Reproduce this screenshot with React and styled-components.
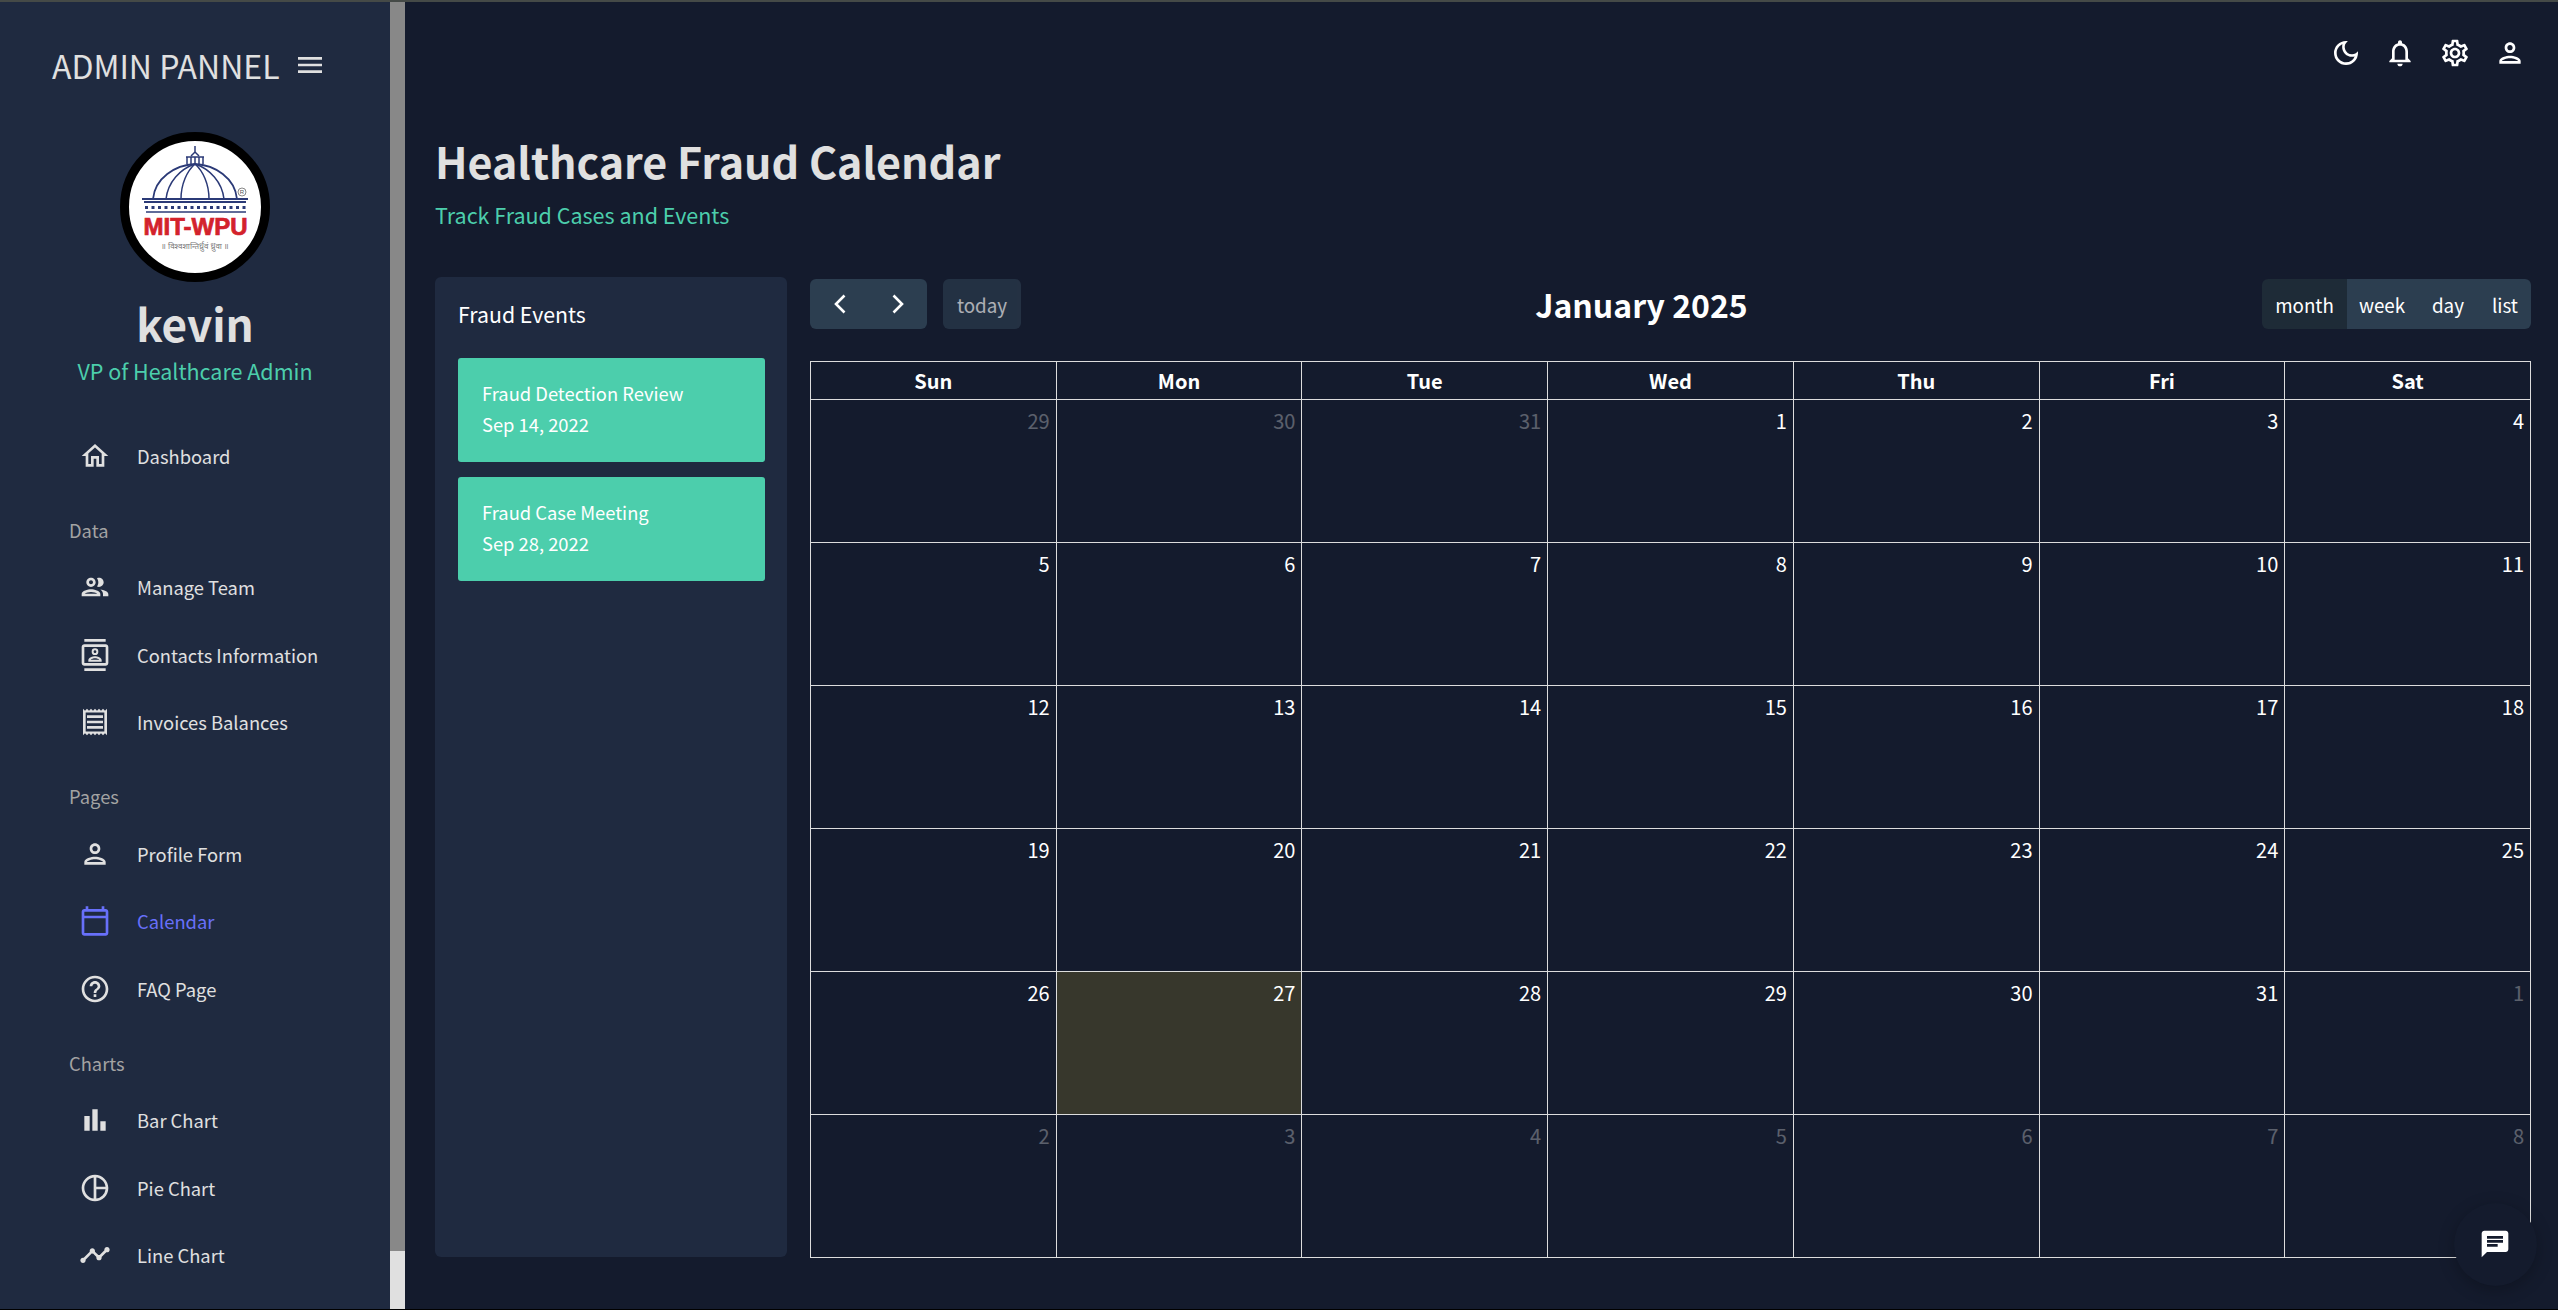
import React from 'react';
import styled, { createGlobalStyle } from 'styled-components';
import {
  MdOutlineHome, MdOutlinePeople, MdOutlineContacts, MdOutlineReceipt, MdOutlinePerson,
  MdOutlineCalendarToday, MdOutlineHelpOutline, MdOutlineBarChart, MdOutlinePieChart,
  MdOutlineTimeline, MdOutlineDarkMode, MdOutlineNotifications, MdOutlineSettings,
  MdOutlineMenu, MdChat,
} from 'react-icons/md';

const GlobalStyle = createGlobalStyle`
  html, body { margin: 0; padding: 0; height: 100%; background: #141b2d; overflow: hidden; }
  body { font-family: "Noto Sans CJK SC", "Noto Sans", sans-serif; }
  * { box-sizing: border-box; }
`;

const Page = styled.div`
  height: 1310px;
  display: flex;
  flex-direction: column;
  background: #141b2d;
  position: relative;
`;
const TopLine = styled.div`
  height: 2px;
  flex: none;
  background: #454a47;
`;
const BottomLine = styled.div`
  height: 1px;
  flex: none;
  background: #000;
`;
const Body = styled.div`
  flex: 1;
  display: flex;
  min-height: 0;
`;

/* sidebar */
const Sidebar = styled.aside`
  width: 390px;
  flex: none;
  background: #1f2a40;
  padding-top: 37px;
  display: flex;
  flex-direction: column;
`;
const Scrollbar = styled.div`
  width: 15px;
  flex: none;
  display: flex;
  flex-direction: column;
  background: #e0e0e0;
`;
const Thumb = styled.div`
  height: 1249px;
  background: #888;
`;
const Brand = styled.div`
  display: flex;
  align-items: center;
  padding-left: 52px;
  height: 52px;
  color: #e0e0e0;
  font-size: 32px;
  line-height: 52px;
  svg { margin-left: 14px; }
`;
const Avatar = styled.div`
  width: 150px;
  height: 150px;
  margin: 41px auto 0;
  border-radius: 50%;
  border: 9px solid #000;
  background: #fff;
  overflow: hidden;
  svg { display: block; margin: -9px; }
`;
const UserName = styled.div`
  margin-top: 10px;
  text-align: center;
  color: #e0e0e0;
  font-size: 44px;
  font-weight: 700;
  line-height: 62px;
`;
const UserRole = styled.div`
  margin-top: -1px;
  text-align: center;
  color: #4cceac;
  font-size: 21.5px;
  line-height: 36px;
`;
const Menu = styled.nav`
  margin-top: 33px;
  display: flex;
  flex-direction: column;
`;
const MenuItem = styled.div`
  height: 67.5px;
  display: flex;
  align-items: center;
  padding-left: 79px;
  font-size: 18.35px;
  color: ${props => (props.$active ? '#6870fa' : '#e0e0e0')};
  svg { flex: none; }
`;
const MenuText = styled.span`
  margin-left: 26px;
`;
const SectionLabel = styled.div`
  height: 64px;
  padding: 26px 0 0 69px;
  font-size: 18.35px;
  line-height: 28px;
  color: #a3a3a3;
`;

/* main */
const Main = styled.main`
  flex: 1;
  min-width: 0;
  display: flex;
  flex-direction: column;
`;
const TopBar = styled.div`
  display: flex;
  justify-content: flex-end;
  padding: 24px 21px 0 0;
  color: #fff;
`;
const TopIcon = styled.div`
  width: 54.7px;
  height: 54px;
  display: flex;
  align-items: center;
  justify-content: center;
`;
const Content = styled.div`
  padding: 47px 27px 0 30px;
`;
const Title = styled.h1`
  margin: 0;
  color: #e0e0e0;
  font-size: 43px;
  font-weight: 700;
  line-height: 66px;
`;
const Subtitle = styled.div`
  margin-top: 4px;
  color: #4cceac;
  font-size: 21.5px;
  line-height: 36px;
`;
const Columns = styled.div`
  margin-top: 44px;
  display: flex;
  gap: 23px;
`;
const EventPanel = styled.section`
  width: 352px;
  height: 980px;
  flex: none;
  padding: 19px 22px 0 23px;
  background: #1f2a40;
  border-radius: 6px;
`;
const PanelTitle = styled.div`
  color: #fff;
  font-size: 21.3px;
  line-height: 36px;
`;
const EventCard = styled.div`
  height: 104px;
  margin-top: ${props => props.$first ? '26px' : '15px'};
  padding: 20px 24px;
  background: #4cceac;
  border-radius: 3px;
  color: #fff;
  font-size: 18.35px;
  line-height: 31px;
`;
const Calendar = styled.section`
  flex: 1;
  min-width: 0;
`;
const CalToolbar = styled.div`
  height: 50px;
  margin-top: 2px;
  display: flex;
  justify-content: space-between;
  align-items: center;
`;
const ToolGroup = styled.div`
  display: flex;
  gap: ${props => props.$gap || 0}px;
`;
const ButtonGroup = styled.div`
  display: flex;
  height: 50px;
  border-radius: 6px;
  overflow: hidden;
`;
const ToolButton = styled.button`
  width: ${props => props.$w}px;
  height: 50px;
  padding: 0;
  border: 0;
  display: flex;
  align-items: center;
  justify-content: center;
  font-family: inherit;
  font-size: 18.8px;
  color: #fff;
  background: ${props => props.$active ? '#1e2b37' : '#2c3e50'};
`;
const TodayButton = styled(ToolButton)`
  opacity: 0.65;
  border-radius: 6px;
`;
const CalTitle = styled.h2`
  margin: 0;
  color: #fff;
  font-size: 32px;
  font-weight: 700;
  line-height: 50px;
`;
const Grid = styled.div`
  margin-top: 32px;
  display: grid;
  grid-template-columns: repeat(7, 1fr);
  grid-template-rows: 38px repeat(6, 143px);
  border-top: 1px solid #ddd;
  border-left: 1px solid #ddd;
`;
const HeadCell = styled.div`
  border-right: 1px solid #ddd;
  border-bottom: 1px solid #ddd;
  display: flex;
  align-items: center;
  justify-content: center;
  color: #fff;
  font-size: 20px;
  font-weight: 700;
`;
const DayCell = styled.div`
  border-right: 1px solid #ddd;
  border-bottom: 1px solid #ddd;
  padding: 6px 6px 0 0;
  text-align: right;
  font-size: 20px;
  line-height: 30px;
  background: ${props => props.$today ? 'rgba(255, 220, 40, 0.15)' : 'transparent'};
`;
const DayNumber = styled.span`
  color: #fff;
  opacity: ${props => props.$muted ? 0.3 : 1};
`;
const ChatButton = styled.div`
  position: absolute;
  left: 2453.5px;
  top: 1202.5px;
  width: 83px;
  height: 83px;
  border-radius: 50%;
  background: #141b2d;
  color: #fff;
  display: flex;
  align-items: center;
  justify-content: center;
  box-shadow: 0 4px 16px rgba(0, 0, 0, 0.25);
`;

const MitLogo = () => (
  <svg width="150" height="150" viewBox="0 0 150 150">
    <g fill="none" stroke="#2b3a77" strokeWidth="1.5">
      <path d="M33 67C35 46 55 33 75 32C95 33 115 46 117 67" strokeWidth="1.8" />
      <path d="M46 67C48 50 60 37 75 32C90 37 102 50 104 67" />
      <path d="M61 67C61 52 67 39 75 32C83 39 89 52 89 67" />
      <path d="M67 32V25H83V32M71 25V32M75 25V32M79 25V32M66 25H84" />
      <path d="M71 24L75 20L79 24M75 20V14" />
      <path d="M22 67H128M24 70H126" strokeWidth="2" />
      <path d="M26 80H126" strokeWidth="1.5" />
    </g>
    <g stroke="#2b3a77" strokeWidth="3" strokeDasharray="3 3.5">
      <path d="M25 75.5H126" />
    </g>
    <circle cx="122" cy="60" r="4" fill="none" stroke="#555" strokeWidth="0.7" />
    <text x="122" y="62" textAnchor="middle" fontSize="6" fill="#555" fontFamily="'Liberation Sans', sans-serif">R</text>
    <text x="75.5" y="103" textAnchor="middle" fontSize="23" fontWeight="700" fill="#d3222c" stroke="#d3222c" strokeWidth="0.7" textLength="104" lengthAdjust="spacingAndGlyphs" fontFamily="'Liberation Sans', sans-serif">MIT-WPU</text>
    <text x="75" y="117" textAnchor="middle" fontSize="8" fill="#777" fontFamily="'Noto Sans', 'Liberation Sans', sans-serif">॥ विश्वशान्तिर्ध्रुवं ध्रुवा ॥</text>
  </svg>
);

const ChevronLeft = () => (
  <svg width="16" height="22" viewBox="0 0 16 22" fill="none" stroke="#fff" strokeWidth="2.6"><path d="M12.5 2.5L4 11L12.5 19.5" /></svg>
);
const ChevronRight = () => (
  <svg width="16" height="22" viewBox="0 0 16 22" fill="none" stroke="#fff" strokeWidth="2.6"><path d="M3.5 2.5L12 11L3.5 19.5" /></svg>
);

const menuSections = [
  { items: [{ label: 'Dashboard', icon: MdOutlineHome }] },
  { label: 'Data', items: [
    { label: 'Manage Team', icon: MdOutlinePeople },
    { label: 'Contacts Information', icon: MdOutlineContacts },
    { label: 'Invoices Balances', icon: MdOutlineReceipt },
  ] },
  { label: 'Pages', items: [
    { label: 'Profile Form', icon: MdOutlinePerson },
    { label: 'Calendar', icon: MdOutlineCalendarToday, active: true },
    { label: 'FAQ Page', icon: MdOutlineHelpOutline },
  ] },
  { label: 'Charts', items: [
    { label: 'Bar Chart', icon: MdOutlineBarChart },
    { label: 'Pie Chart', icon: MdOutlinePieChart },
    { label: 'Line Chart', icon: MdOutlineTimeline },
  ] },
];

const weekDays = ['Sun', 'Mon', 'Tue', 'Wed', 'Thu', 'Fri', 'Sat'];

// 42 cells starting from Dec 29
const days = [];
[29, 30, 31].forEach(d => days.push({ d, muted: true }));
for (let d = 1; d <= 31; d++) days.push({ d, today: d === 27 });
for (let d = 1; d <= 8; d++) days.push({ d, muted: true });

const App = () => (
  <Page>
    <GlobalStyle />
    <TopLine />
    <Body>
      <Sidebar>
        <Brand>ADMIN PANNEL<MdOutlineMenu size={32} /></Brand>
        <Avatar><MitLogo /></Avatar>
        <UserName>kevin</UserName>
        <UserRole>VP of Healthcare Admin</UserRole>
        <Menu>
          {menuSections.map((section, i) => (
            <React.Fragment key={i}>
              {section.label && <SectionLabel>{section.label}</SectionLabel>}
              {section.items.map(item => (
                <MenuItem key={item.label} $active={item.active}>
                  <item.icon size={32} />
                  <MenuText>{item.label}</MenuText>
                </MenuItem>
              ))}
            </React.Fragment>
          ))}
        </Menu>
      </Sidebar>
      <Scrollbar><Thumb /></Scrollbar>
      <Main>
        <TopBar>
          <TopIcon><MdOutlineDarkMode size={32} /></TopIcon>
          <TopIcon><MdOutlineNotifications size={32} /></TopIcon>
          <TopIcon><MdOutlineSettings size={32} /></TopIcon>
          <TopIcon><MdOutlinePerson size={32} /></TopIcon>
        </TopBar>
        <Content>
          <Title>Healthcare Fraud Calendar</Title>
          <Subtitle>Track Fraud Cases and Events</Subtitle>
          <Columns>
            <EventPanel>
              <PanelTitle>Fraud Events</PanelTitle>
              <EventCard $first>Fraud Detection Review<br />Sep 14, 2022</EventCard>
              <EventCard>Fraud Case Meeting<br />Sep 28, 2022</EventCard>
            </EventPanel>
            <Calendar>
              <CalToolbar>
                <ToolGroup $gap={16}>
                  <ButtonGroup>
                    <ToolButton $w={59}><ChevronLeft /></ToolButton>
                    <ToolButton $w={58}><ChevronRight /></ToolButton>
                  </ButtonGroup>
                  <TodayButton $w={78}>today</TodayButton>
                </ToolGroup>
                <CalTitle>January 2025</CalTitle>
                <ToolGroup>
                  <ButtonGroup>
                    <ToolButton $w={85} $active>month</ToolButton>
                    <ToolButton $w={70}>week</ToolButton>
                    <ToolButton $w={62}>day</ToolButton>
                    <ToolButton $w={52}>list</ToolButton>
                  </ButtonGroup>
                </ToolGroup>
              </CalToolbar>
              <Grid>
                {weekDays.map(w => <HeadCell key={w}>{w}</HeadCell>)}
                {days.map((day, i) => (
                  <DayCell key={i} $today={day.today}>
                    <DayNumber $muted={day.muted}>{day.d}</DayNumber>
                  </DayCell>
                ))}
              </Grid>
            </Calendar>
          </Columns>
        </Content>
      </Main>
    </Body>
    <BottomLine />
    <ChatButton><MdChat size={32} /></ChatButton>
  </Page>
);

export default App;
